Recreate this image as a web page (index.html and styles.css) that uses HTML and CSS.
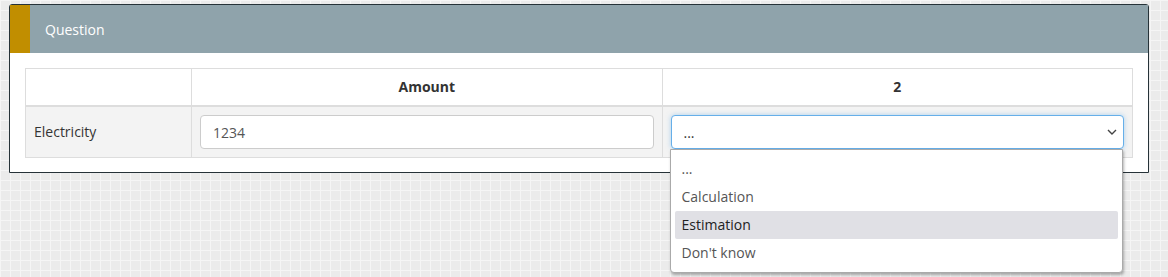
FILE: index.html
```html
<!DOCTYPE html>
<html lang="en">
<head>
  <meta charset="UTF-8">
  <title>Question</title>
  <link rel="stylesheet" href="styles.css">
</head>
<body>

  <div class="panel">
    <div class="panel-head">
      <span class="stripe"></span>
      <span class="panel-title">Question</span>
    </div>
    <div class="panel-body">
      <table class="grid">
        <thead>
          <tr>
            <th class="col-label"></th>
            <th>Amount</th>
            <th>2</th>
          </tr>
        </thead>
        <tbody>
          <tr>
            <td class="col-label">Electricity</td>
            <td><input type="text" class="field" value="1234"></td>
            <td>
              <div class="select-wrap">
                <div class="field select open">
                  <span>...</span>
                  <svg class="chevron" width="10" height="6" viewBox="0 0 10 6">
                    <path d="M1 1 L5 5 L9 1" fill="none" stroke="#444" stroke-width="1.4"/>
                  </svg>
                </div>
                <ul class="options">
                  <li>...</li>
                  <li>Calculation</li>
                  <li class="hover">Estimation</li>
                  <li>Don't know</li>
                </ul>
              </div>
            </td>
          </tr>
        </tbody>
      </table>
    </div>
  </div>

</body>
</html>
```

FILE: styles.css
```css
body {
  margin: 0;
  padding: 4px 0 0 9px;
  font-family: 'Open Sans', sans-serif;
  font-size: 14px;
  color: #333;
  background-color: #ebebeb;
  background-image:
    linear-gradient(to right, #f5f5f5 1px, transparent 1px),
    linear-gradient(to bottom, #f5f5f5 1px, transparent 1px);
  background-size: 10px 10px;
  height: 277px;
  box-sizing: border-box;
}

.panel {
  width: 1140px;
  box-sizing: border-box;
  background: #fff;
  border: 1px solid #263238;
  border-radius: 3px 3px 0 0;
}

.panel-head {
  display: flex;
  align-items: center;
  height: 48px;
  background-color: #8fa3ab;
}

.stripe {
  width: 20px;
  height: 100%;
  background-color: #c18e00;
}

.panel-title {
  color: #fff;
  padding-left: 15px;
  padding-top: 1px;
}

.panel-body {
  padding: 15px 15px 14px;
}

.grid {
  width: 100%;
  border-collapse: collapse;
  table-layout: fixed;
}

.grid th,
.grid td {
  border: 1px solid #ddd;
  padding: 8px;
  line-height: 20px;
}

.grid th {
  font-weight: bold;
  text-align: center;
  height: 20px;
  border-bottom-width: 2px;
}

.grid .col-label {
  width: 149px;
}

.grid tbody tr {
  background-color: #f3f3f3;
}

.field {
  display: block;
  width: 100%;
  height: 34px;
  box-sizing: border-box;
  padding: 6px 12px;
  font-family: 'Open Sans', sans-serif;
  font-size: 14px;
  color: #555;
  background: #fff;
  border: 1px solid #ccc;
  border-radius: 4px;
  line-height: 20px;
}

.select-wrap {
  position: relative;
}

.select {
  display: flex;
  align-items: center;
  justify-content: space-between;
  padding-right: 6px;
  color: #333;
}

.select.open {
  border-color: #66afe9;
  box-shadow: 0 0 5px rgba(102, 175, 233, 0.5);
}

.select span {
  padding-top: 2px;
}

.options {
  position: absolute;
  left: -1px;
  right: 1px;
  top: 34px;
  margin: 0;
  padding: 5px 4px;
  list-style: none;
  background: #fff;
  border: 1px solid #aaa;
  border-radius: 0 0 4px 4px;
  box-shadow: 1px 2px 3px rgba(0, 0, 0, 0.3);
  z-index: 2;
}

.options li {
  height: 28px;
  line-height: 28px;
  padding: 0 6px 0 7px;
  color: #555;
  border-radius: 2px;
}

.options li.hover {
  background-color: #e0e0e5;
  color: #222;
}
```
